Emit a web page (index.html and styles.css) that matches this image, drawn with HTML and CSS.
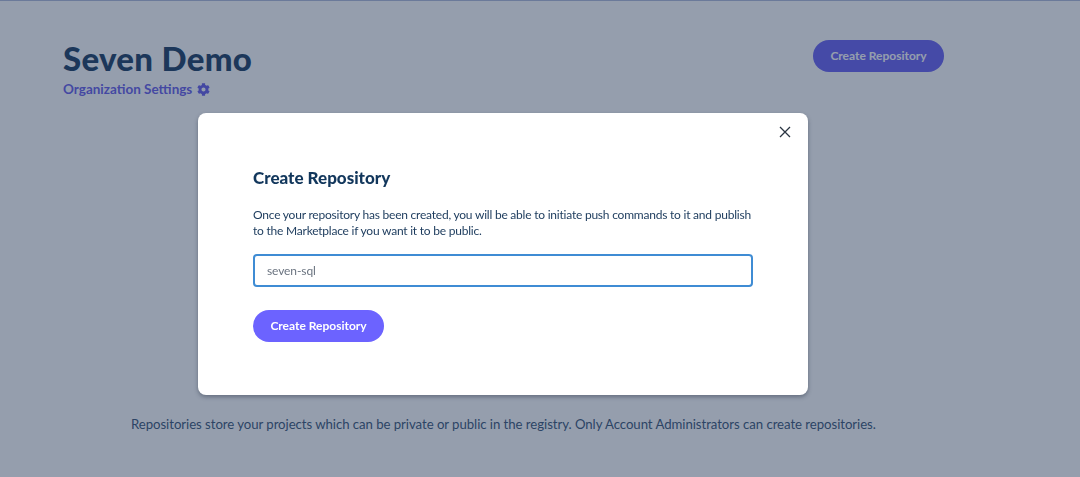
FILE: index.html
```html
<!DOCTYPE html>
<html lang="en">
<head>
<meta charset="utf-8">
<title>Seven Demo</title>
<link rel="stylesheet" href="styles.css">
</head>
<body>
<main class="page">
  <header class="page-head">
    <div class="org">
      <h1 class="org-name">Seven Demo</h1>
      <a class="org-link">Organization Settings
        <svg class="gear" viewBox="0 0 512 512" width="13" height="13"><path fill="currentColor" d="M487.4 315.7l-42.6-24.6c4.3-23.2 4.3-47 0-70.2l42.6-24.6c4.9-2.8 7.1-8.6 5.5-14-11.1-35.6-30-67.8-54.7-94.6-3.8-4.1-10-5.1-14.8-2.3L380.8 110c-17.9-15.4-38.5-27.3-60.8-35.1V25.8c0-5.6-3.9-10.5-9.4-11.7-36.7-8.2-74.3-7.8-109.2 0-5.5 1.2-9.4 6.1-9.4 11.7V75c-22.2 7.9-42.8 19.8-60.8 35.1L88.7 85.5c-4.9-2.8-11-1.9-14.8 2.3-24.7 26.7-43.6 58.9-54.7 94.6-1.7 5.4.6 11.2 5.5 14L67.3 221c-4.3 23.2-4.3 47 0 70.2l-42.6 24.6c-4.9 2.8-7.1 8.6-5.5 14 11.1 35.6 30 67.8 54.7 94.6 3.8 4.1 10 5.1 14.8 2.3l42.6-24.6c17.9 15.4 38.5 27.3 60.8 35.1v49.2c0 5.6 3.9 10.5 9.4 11.7 36.7 8.2 74.3 7.8 109.2 0 5.5-1.2 9.4-6.1 9.4-11.7v-49.2c22.2-7.9 42.8-19.8 60.8-35.1l42.6 24.6c4.9 2.8 11 1.9 14.8-2.3 24.7-26.7 43.6-58.9 54.7-94.6 1.5-5.5-.7-11.3-5.6-14.1zM256 336c-44.1 0-80-35.9-80-80s35.9-80 80-80 80 35.9 80 80-35.9 80-80 80z"/></svg>
      </a>
    </div>
    <button class="btn btn-head" type="button">Create Repository</button>
  </header>
  <p class="note">Repositories store your projects which can be private or public in the registry. Only Account Administrators can create repositories.</p>
</main>

<div class="overlay"></div>

<section class="modal">
  <button class="close" type="button" aria-label="Close">
    <svg viewBox="0 0 12 12" width="12" height="12"><path d="M1 1l10 10M11 1L1 11" stroke="currentColor" stroke-width="1.3" fill="none"/></svg>
  </button>
  <h2 class="modal-title">Create Repository</h2>
  <p class="modal-text">Once your repository has been created, you will be able to initiate push commands to it and publish to the Marketplace if you want it to be public.</p>
  <input class="field" type="text" value="seven-sql">
  <button class="btn btn-modal" type="button">Create Repository</button>
</section>
</body>
</html>
```
FILE: styles.css
```css
* { box-sizing: border-box; }
html, body { margin: 0; height: 100%; overflow: hidden; }
body {
  background: #fff;
  font-family: "Lato", "Open Sans", sans-serif;
  color: #1a3a5c;
}
.page { padding: 39px 136px 0 63px; }
.page-head { display: flex; justify-content: space-between; align-items: flex-start; }
.org-name {
  margin: 0;
  font-size: 33px;
  line-height: 38px;
  font-weight: 900;
  letter-spacing: 0.3px;
  color: #0c3158;
}
.org-link {
  display: flex;
  align-items: center;
  gap: 5px;
  margin-top: 3px;
  font-size: 13.5px;
  line-height: 18px;
  font-weight: 700;
  letter-spacing: 0;
  color: #5c53e8;
}
.btn {
  display: block;
  width: 131px;
  height: 32px;
  border: 0;
  border-radius: 16px;
  background: #6c63ff;
  color: #fff;
  font-family: inherit;
  font-size: 12px;
  font-weight: 700;
  letter-spacing: 0;
  padding: 0 0 2px;
}
.btn-head { margin-top: 1px; background: #5f57f2; }
.note {
  margin: 0;
  padding-top: 317px;
  padding-left: 68px;
  font-size: 13.2px;
  line-height: 18px;
  letter-spacing: -0.05px;
  white-space: nowrap;
  color: #2c4a6e;
}
.overlay {
  position: fixed;
  inset: 0;
  background: rgba(44, 62, 92, 0.5);
  border-top: 1px solid #6b7a9a;
}
.modal {
  position: fixed;
  left: 198px;
  top: 113px;
  width: 610px;
  height: 282px;
  padding: 54px 55px 0;
  background: #fff;
  border-radius: 8px;
  box-shadow: 0 2px 4px rgba(30, 40, 60, 0.4);
}
.close {
  position: absolute;
  top: 13px;
  right: 17px;
  display: block;
  padding: 0;
  border: 0;
  background: none;
  color: #2a3442;
  line-height: 0;
}
.modal-title {
  margin: 0;
  font-size: 17px;
  line-height: 22px;
  font-weight: 900;
  letter-spacing: 0;
  color: #12375c;
}
.modal-text {
  margin: 18px 0 0;
  width: 510px;
  font-size: 12px;
  line-height: 16px;
  letter-spacing: -0.22px;
  color: #1b3a5c;
}
.field {
  display: block;
  width: 500px;
  height: 33px;
  margin-top: 15px;
  padding: 0 12px;
  border: 2px solid #3f8cd4;
  border-radius: 4px;
  outline: none;
  font-family: inherit;
  font-size: 12px;
  letter-spacing: -0.1px;
  color: #6b7480;
}
.btn-modal { margin-top: 23px; }
```
